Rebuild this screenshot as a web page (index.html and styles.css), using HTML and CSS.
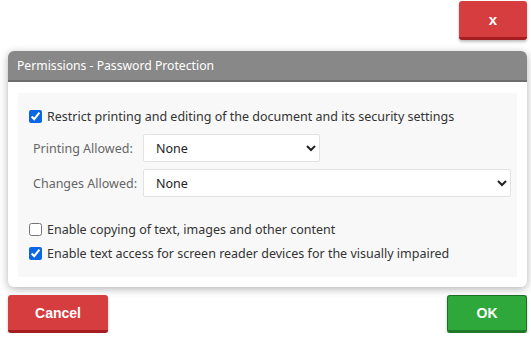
FILE: index.html
```html
<!DOCTYPE html>
<html lang="en">
<head>
  <meta charset="UTF-8">
  <title>Permissions - Password Protection</title>
  <link rel="stylesheet" href="styles.css">
</head>
<body>
  <div class="top-bar">
    <button type="button" class="btn btn-red btn-close">x</button>
  </div>
  <div class="panel">
    <div class="panel-header">Permissions - Password Protection</div>
    <div class="panel-body">
      <div class="box">
        <label class="check"><input type="checkbox" checked> Restrict printing and editing of the document and its security settings</label>
        <div class="field">
          <span class="field-label">Printing Allowed:</span>
          <select class="select select-short">
            <option>None</option>
          </select>
        </div>
        <div class="field">
          <span class="field-label">Changes Allowed:</span>
          <select class="select select-wide">
            <option>None</option>
          </select>
        </div>
        <label class="check check-gap"><input type="checkbox"> Enable copying of text, images and other content</label>
        <label class="check check-last"><input type="checkbox" checked> Enable text access for screen reader devices for the visually impaired</label>
      </div>
    </div>
  </div>
  <div class="footer">
    <button type="button" class="btn btn-red btn-cancel">Cancel</button>
    <button type="button" class="btn btn-green btn-ok">OK</button>
  </div>
</body>
</html>
```

FILE: styles.css
```css
* { box-sizing: border-box; }
body {
  margin: 0;
  padding: 1px 4px 0 8px;
  font-family: "Noto Sans", "Open Sans", sans-serif;
  font-size: 12.5px;
  color: #333;
  background: #fff;
}
.top-bar {
  display: flex;
  justify-content: flex-end;
}
.btn {
  font-family: "Liberation Sans", Arial, sans-serif;
  font-weight: bold;
  font-size: 14px;
  color: #fff;
  border: none;
  border-radius: 3px;
  cursor: pointer;
  box-shadow: 0 2px 3px rgba(0,0,0,0.25);
}
.btn-red {
  background: #d63d3f;
  border-bottom: 3px solid #a41e20;
}
.btn-green {
  background: #2ea83a;
  border: 1px solid #1f6e27;
  border-bottom: 3px solid #1f7a28;
}
.btn-close {
  width: 68px;
  height: 39px;
  font-size: 15px;
}
.panel {
  margin-top: 11px;
  background: #fff;
  border-radius: 6px;
  box-shadow: 0 2px 8px rgba(0,0,0,0.3);
  overflow: hidden;
}
.panel-header {
  background: #888;
  color: #fff;
  height: 31px;
  line-height: 29px;
  padding-left: 9px;
  font-size: 12.2px;
  border-bottom: 2px solid #6e6e6e;
}
.panel-body {
  padding: 11px 10px 10px;
}
.box {
  background: #f8f8f8;
  padding: 12px 6px 13px 11px;
  display: flex;
  flex-direction: column;
}
.check {
  display: flex;
  align-items: center;
  height: 22px;
  color: #333;
}
.check input {
  width: 13px;
  height: 13px;
  margin: 0 5px 0 0;
  accent-color: #0a66e4;
}
.check-gap {
  margin-top: 21px;
}
.check-last {
  margin-top: 2px;
}
.field {
  display: flex;
  align-items: center;
  margin-top: 7px;
  padding-left: 4px;
}
.field-label {
  width: 110px;
  color: #666;
}
.select {
  height: 28px;
  font-family: "Noto Sans", "Open Sans", sans-serif;
  font-size: 12.5px;
  color: #222;
  background: #fff;
  border: 1px solid #e2e2e2;
  border-radius: 2px;
  padding: 0 6px 0 8px;
}
.select-short { width: 177px; }
.select-wide { flex: 1; }
.footer {
  display: flex;
  justify-content: space-between;
  align-items: flex-start;
  margin-top: 8px;
}
.btn-cancel {
  width: 100px;
  height: 38px;
}
.btn-ok {
  width: 80px;
  height: 38px;
}
```
